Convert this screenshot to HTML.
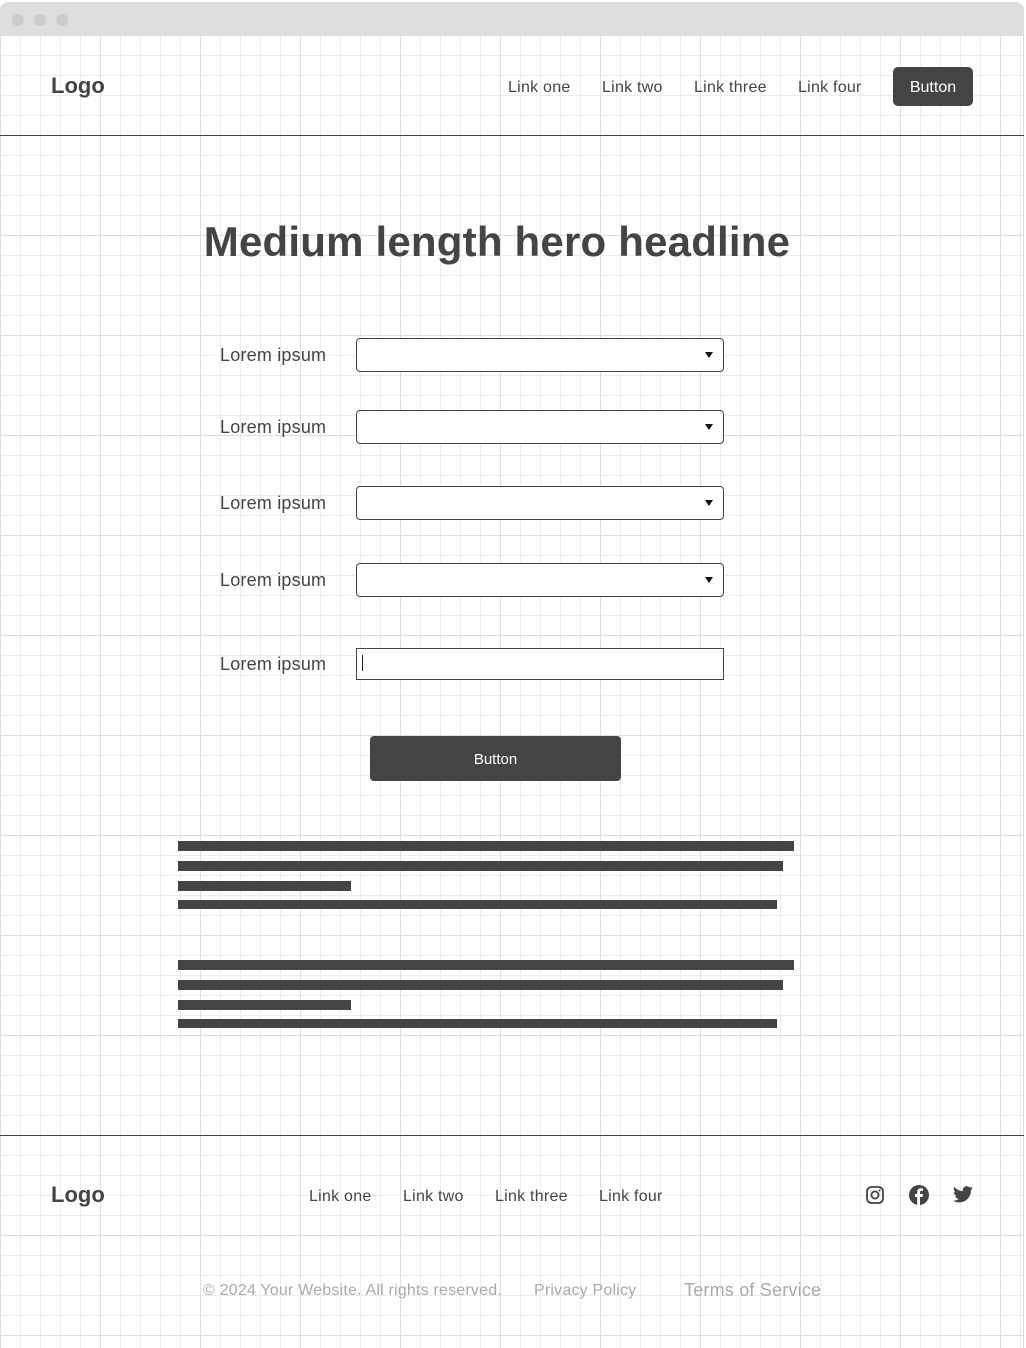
<!DOCTYPE html>
<html><head><meta charset="utf-8"><style>
*{margin:0;padding:0;box-sizing:border-box}
body{width:1026px;height:1348px;position:relative;overflow:hidden;background:#fff;font-family:"Liberation Sans",sans-serif;color:#444}
.grid{position:absolute;left:0;top:35px;width:1024px;height:1313px;
background-image:
linear-gradient(to right,#dedede 1px,transparent 1px),
linear-gradient(to bottom,#dedede 1px,transparent 1px),
linear-gradient(to right,#ececec 1px,transparent 1px),
linear-gradient(to bottom,#ececec 1px,transparent 1px);
background-size:100px 100px,100px 100px,20px 20px,20px 20px;
background-position:0 0,0 0,0 0,0 0;border-right:1px solid #ddd}
.bar{position:absolute;left:0;top:2px;width:1024px;height:33px;background:#dedede;border-radius:8px 8px 0 0}
.dot{position:absolute;top:12px;width:12px;height:12px;border-radius:50%;background:#cbcbcb}
.a{position:absolute;white-space:nowrap}
.hr{position:absolute;left:0;width:1024px;height:1px;background:#444}
.sel{position:absolute;left:356px;width:368px;height:34px;border:1px solid #444;border-radius:4px;background:#fff}
.sel:after{content:"";position:absolute;right:10px;top:13px;border-left:4px solid transparent;border-right:4px solid transparent;border-top:6px solid #111}
.lab{position:absolute;left:220px;font-size:18px;letter-spacing:0.2px}
.tb{position:absolute;left:178px;height:10px;background:#444}
.nav{font-size:16px;letter-spacing:0.25px}
</style></head><body>
<div class="grid"></div>
<div class="bar"><div class="dot" style="left:12px"></div><div class="dot" style="left:34px"></div><div class="dot" style="left:56px"></div></div>
<div class="a" style="left:51px;top:73px;font-size:22px;font-weight:bold">Logo</div>
<div class="a nav" style="left:508px;top:79px">Link one</div>
<div class="a nav" style="left:602px;top:79px">Link two</div>
<div class="a nav" style="left:694px;top:79px">Link three</div>
<div class="a nav" style="left:798px;top:79px">Link four</div>
<div class="a" style="left:893px;top:67px;width:80px;height:39px;background:#444;border-radius:5px;color:#fff;font-size:16px;text-align:center;line-height:42px">Button</div>
<div class="hr" style="top:135px"></div>
<div class="a" style="left:0;width:994px;text-align:center;top:218px;font-size:42px;font-weight:bold;letter-spacing:0.2px">Medium length hero headline</div>
<div class="lab" style="top:345px">Lorem ipsum</div><div class="sel" style="top:338px"></div>
<div class="lab" style="top:417px">Lorem ipsum</div><div class="sel" style="top:410px"></div>
<div class="lab" style="top:493px">Lorem ipsum</div><div class="sel" style="top:486px"></div>
<div class="lab" style="top:570px">Lorem ipsum</div><div class="sel" style="top:563px"></div>
<div class="lab" style="top:654px">Lorem ipsum</div>
<div class="a" style="left:356px;top:648px;width:368px;height:32px;border:1px solid #444;background:#fff"><div style="position:absolute;left:5px;top:6px;width:1px;height:16px;background:#222"></div></div>
<div class="a" style="left:370px;top:736px;width:251px;height:45px;background:#444;border-radius:4px;color:#fff;font-size:15px;text-align:center;line-height:48px">Button</div>
<div class="tb" style="top:841px;width:616px"></div>
<div class="tb" style="top:861px;width:605px"></div>
<div class="tb" style="top:881px;width:173px"></div>
<div class="tb" style="top:900px;width:599px;height:9px"></div>
<div class="tb" style="top:960px;width:616px"></div>
<div class="tb" style="top:980px;width:605px"></div>
<div class="tb" style="top:1000px;width:173px"></div>
<div class="tb" style="top:1019px;width:599px;height:9px"></div>
<div class="hr" style="top:1135px"></div>
<div class="a" style="left:51px;top:1182px;font-size:22px;font-weight:bold">Logo</div>
<div class="a nav" style="left:309px;top:1188px">Link one</div>
<div class="a nav" style="left:403px;top:1188px">Link two</div>
<div class="a nav" style="left:495px;top:1188px">Link three</div>
<div class="a nav" style="left:599px;top:1188px">Link four</div>
<svg class="a" style="left:866px;top:1186px" width="18" height="18" viewBox="0 0 18 18"><rect x="1" y="1" width="16" height="16" rx="4.5" fill="none" stroke="#444" stroke-width="1.8"/><circle cx="9" cy="9" r="3.6" fill="none" stroke="#444" stroke-width="1.8"/><circle cx="13.5" cy="4.5" r="1" fill="#444"/></svg>
<svg class="a" style="left:909px;top:1185px" width="20" height="20" viewBox="0 0 20 20"><circle cx="10" cy="10" r="10" fill="#444"/><path d="M11 20V12h2.6l.4-3H11V7.3c0-.9.3-1.4 1.5-1.4H14V3.3c-.3 0-1.2-.1-2.2-.1-2.2 0-3.6 1.3-3.6 3.7V9H6v3h2.2v8z" fill="#fff"/></svg>
<svg class="a" style="left:953px;top:1186px" width="20" height="17" viewBox="0 0 24 20"><path d="M24 2.4c-.9.4-1.8.6-2.8.8 1-.6 1.8-1.6 2.2-2.7-1 .6-2 1-3.1 1.2C19.3.7 18 0 16.6 0c-2.7 0-4.9 2.2-4.9 4.9 0 .4 0 .8.1 1.1C7.7 5.8 4.1 3.9 1.7.9c-.4.7-.7 1.600-.7 2.5 0 1.7.9 3.2 2.2 4.1-.8 0-1.6-.2-2.2-.6v.1c0 2.4 1.7 4.4 3.9 4.8-.4.1-.8.2-1.3.2-.3 0-.6 0-.9-.1.6 2 2.4 3.4 4.6 3.4-1.7 1.3-3.8 2.1-6.100 2.1-.4 0-.8 0-1.2-.1 2.2 1.4 4.8 2.2 7.5 2.2 9.1 0 14-7.5 14-14v-.6c1-.7 1.8-1.6 2.5-2.5z" fill="#444"/></svg>
<div class="a" style="left:203px;top:1282px;font-size:16px;color:#aaa;letter-spacing:0.2px">© 2024 Your Website. All rights reserved.</div>
<div class="a" style="left:534px;top:1282px;font-size:16px;color:#aaa;letter-spacing:0.2px">Privacy Policy</div>
<div class="a" style="left:684px;top:1280px;font-size:18px;color:#aaa;letter-spacing:0.2px">Terms of Service</div>
</body></html>
